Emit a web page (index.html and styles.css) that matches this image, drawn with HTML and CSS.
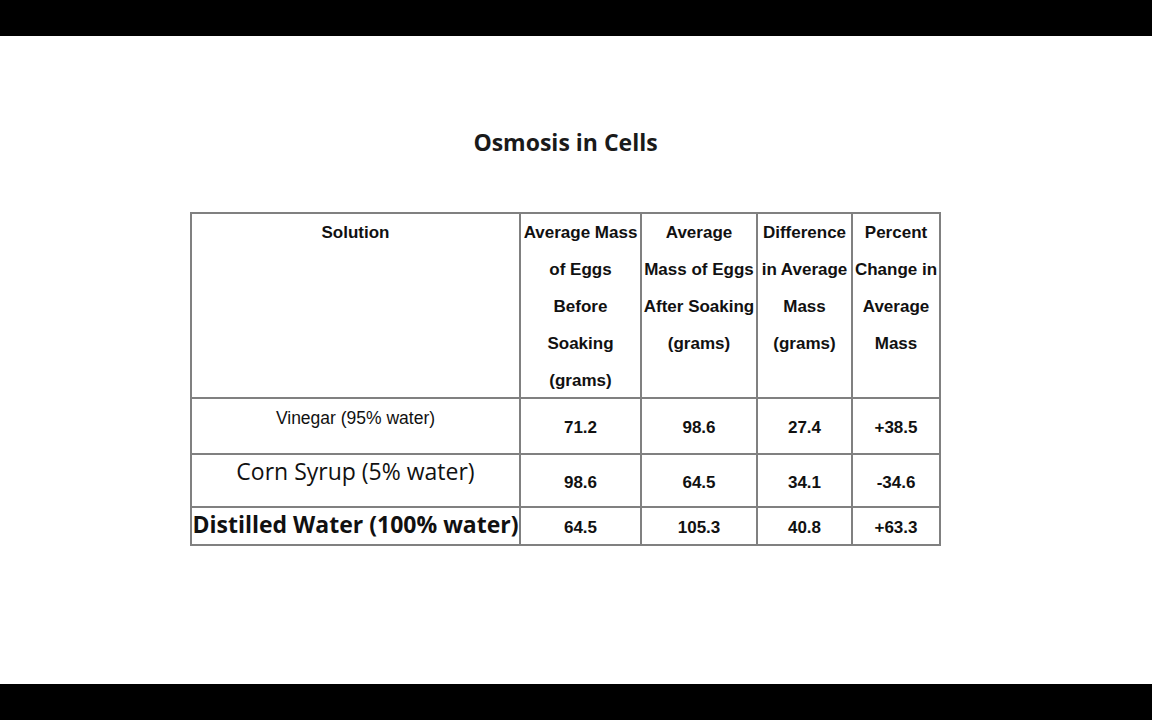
FILE: index.html
```html
<!DOCTYPE html>
<html>
<head>
<meta charset="utf-8">
<link rel="stylesheet" href="styles.css">
</head>
<body>
<div class="screen">
  <div class="content">
    <h1 class="title">Osmosis in Cells</h1>
    <table class="data">
      <colgroup>
        <col class="c1"><col class="c2"><col class="c3"><col class="c4"><col class="c5">
      </colgroup>
      <tr class="head">
        <th><div class="hd">Solution</div></th>
        <th><div class="hd">Average Mass<br>of Eggs<br>Before<br>Soaking<br>(grams)</div></th>
        <th><div class="hd">Average<br>Mass of Eggs<br>After Soaking<br>(grams)</div></th>
        <th><div class="hd">Difference<br>in Average<br>Mass<br>(grams)</div></th>
        <th><div class="hd">Percent<br>Change in<br>Average<br>Mass</div></th>
      </tr>
      <tr class="r1">
        <td class="name vinegar">Vinegar (95% water)</td>
        <td class="num">71.2</td>
        <td class="num">98.6</td>
        <td class="num">27.4</td>
        <td class="num">+38.5</td>
      </tr>
      <tr class="r2">
        <td class="name corn">Corn Syrup (5% water)</td>
        <td class="num">98.6</td>
        <td class="num">64.5</td>
        <td class="num">34.1</td>
        <td class="num">-34.6</td>
      </tr>
      <tr class="r3">
        <td class="name distilled">Distilled Water (100% water)</td>
        <td class="num">64.5</td>
        <td class="num">105.3</td>
        <td class="num">40.8</td>
        <td class="num">+63.3</td>
      </tr>
    </table>
  </div>
</div>
</body>
</html>
```

FILE: styles.css
```css
html, body {
  margin: 0;
  padding: 0;
  background: #000;
}

.screen {
  margin-top: 36px;
  height: 648px;
  background: #fff;
  overflow: hidden;
}

.content {
  margin-left: 191px;
  width: 749px;
  display: flex;
  flex-direction: column;
  align-items: center;
}

.title {
  margin: 91px 0 0 0;
  height: 30px;
  line-height: 30px;
  font-family: "Open Sans", sans-serif;
  font-weight: 700;
  font-size: 23px;
  color: #1a1a1a;
  text-align: center;
}

.data {
  margin-top: 55px;
  border-collapse: collapse;
  width: 749px;
  table-layout: fixed;
  font-family: "Liberation Sans", Arial, sans-serif;
  color: #111;
}

.c1 { width: 329px; }
.c2 { width: 121px; }
.c3 { width: 116px; }
.c4 { width: 95px; }
.c5 { width: 88px; }

.data th,
.data td {
  border: 2px solid #808080;
  padding: 0;
  text-align: center;
}

.data th {
  font-weight: 700;
  font-size: 17px;
  line-height: 37px;
  vertical-align: top;
  height: 182px;
  white-space: nowrap;
}

.hd {
  margin-bottom: -2px;
}

.data td.num {
  font-weight: 700;
  font-size: 17px;
  vertical-align: middle;
  padding-top: 4px;
}

.name {
  vertical-align: top;
  line-height: 37px;
  white-space: nowrap;
}

.r1 td { height: 54px; }
.r2 td { height: 51px; }
.r3 td { height: 36px; }

.r1 td.num { height: 50px; }
.r2 td.num { height: 47px; }
.r3 td.num { height: 32px; }

.vinegar {
  font-size: 17.5px;
  font-weight: 400;
  line-height: 39px;
}

.corn {
  font-family: "Open Sans", sans-serif;
  font-size: 23px;
  font-weight: 400;
  line-height: 33px;
}

.distilled {
  font-family: "Open Sans", sans-serif;
  font-size: 23px;
  font-weight: 700;
  line-height: 33px;
}
```
